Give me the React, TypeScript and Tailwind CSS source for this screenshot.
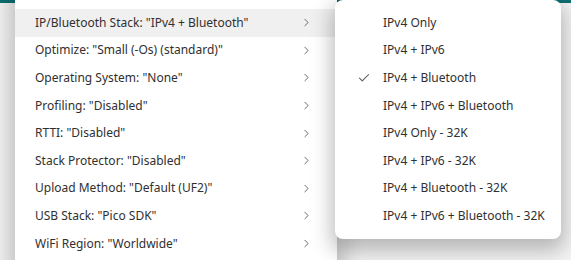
import { ChevronRight, Check } from 'lucide-react';

const settings = [
  'IP/Bluetooth Stack: "IPv4 + Bluetooth"',
  'Optimize: "Small (-Os) (standard)"',
  'Operating System: "None"',
  'Profiling: "Disabled"',
  'RTTI: "Disabled"',
  'Stack Protector: "Disabled"',
  'Upload Method: "Default (UF2)"',
  'USB Stack: "Pico SDK"',
  'WiFi Region: "Worldwide"',
];

const stacks = [
  'IPv4 Only',
  'IPv4 + IPv6',
  'IPv4 + Bluetooth',
  'IPv4 + IPv6 + Bluetooth',
  'IPv4 Only - 32K',
  'IPv4 + IPv6 - 32K',
  'IPv4 + Bluetooth - 32K',
  'IPv4 + IPv6 + Bluetooth - 32K',
];

export default function App() {
  return (
    <div className="relative w-[571px] h-[260px] overflow-hidden bg-[#f4f4f4] font-['Noto_Sans',sans-serif] text-[12px] text-[#303030]">
      {/* teal header behind the menus */}
      <div className="h-[3px] bg-[#0e6f72]" />

      {/* main menu (upper rows scrolled out of view) */}
      <div className="absolute left-[15px] top-[-17px] w-[322px] bg-white rounded-md shadow-[0_4px_20px_6px_rgba(0,0,0,0.22)]">
        <div className="h-[26px]" />
        {settings.map((s, i) => (
          <div
            key={s}
            className={`h-[27.6px] flex items-center justify-between pl-[20px] pr-[24px] ${
              i === 0 ? 'bg-[#f0f0f0]' : ''
            }`}
          >
            <span>{s}</span>
            <ChevronRight size={13} strokeWidth={1.6} className="text-[#555]" />
          </div>
        ))}
        <div className="h-[28px]" />
      </div>

      {/* submenu */}
      <div className="absolute left-[335px] top-[0px] w-[226px] bg-white rounded-lg shadow-[0_8px_20px_4px_rgba(0,0,0,0.25)] pt-[9px] pb-[9px]">
        {stacks.map((s) => (
          <div key={s} className="h-[27.6px] flex items-center">
            <div className="w-[48px] flex justify-end pr-[12px]">
              {s === 'IPv4 + Bluetooth' && (
                <Check size={14} strokeWidth={1.8} className="text-[#555]" />
              )}
            </div>
            <span>{s}</span>
          </div>
        ))}
      </div>
    </div>
  );
}
